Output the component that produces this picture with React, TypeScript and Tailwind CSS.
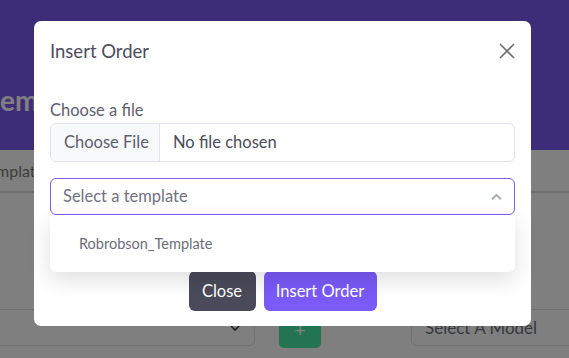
export default function App() {
  return (
    <div className="relative h-[358px] w-[569px] overflow-hidden bg-white font-[Lato,sans-serif]">
      {/* underlying page */}
      <div className="flex h-[150px] flex-col bg-[#7a5af0]">
        <div className="mt-[86px] whitespace-nowrap text-[28px] font-bold leading-[28px] text-white">ement</div>
      </div>
      <div className="box-border flex h-[43px] items-center border-b-2 border-[#dedede]">
        <span className="ml-[-4px] whitespace-nowrap text-[16px] text-[#7a7a7a]">mplate</span>
      </div>
      <div className="mt-[116px] flex items-start">
        <div className="relative ml-[-10px] h-[37px] w-[265px] shrink-0 rounded-[6px] border border-[#dee2e6]">
          <svg className="absolute right-[14px] top-[15px]" width="10" height="6" viewBox="0 0 10 6" fill="none">
            <path d="M1 1l4 4 4-4" stroke="#343a40" strokeWidth="1.6" />
          </svg>
        </div>
        <div className="ml-[24px] flex h-[39px] w-[42px] shrink-0 items-center justify-center rounded-[5px] bg-[#46e8a6] text-[20px] leading-none text-white">
          +
        </div>
        <div className="ml-[90px] flex h-[37px] w-[200px] shrink-0 items-center whitespace-nowrap rounded-[6px] border border-[#dee2e6] pl-[13px] text-[17px] text-[#6c757d]">
          Select A Model
        </div>
      </div>

      {/* backdrop */}
      <div className="absolute inset-0 bg-black/50" />

      {/* modal */}
      <div className="absolute left-[34px] top-[21px] w-[497px] rounded-[7px] bg-white">
        <div className="flex items-center justify-between p-4">
          <div className="text-[18.5px] leading-[28px] text-[#4d4d5c]">Insert Order</div>
          <svg width="16" height="16" viewBox="0 0 16 16" fill="none">
            <path d="M1 1l14 14M15 1L1 15" stroke="#6f6f73" strokeWidth="1.6" />
          </svg>
        </div>
        <div className="px-4 pt-[18px]">
          <div className="mb-[2px] text-[16.5px] leading-[22px] text-[#5e5e6d]">Choose a file</div>
          <div className="box-border flex h-[39px] overflow-hidden rounded-[6px] border border-[#e4e2ef] text-[16.5px]">
            <div className="flex w-[109px] shrink-0 items-center whitespace-nowrap border-r border-[#e4e2ef] bg-[#f8f9fb] pl-[13px] text-[#5e5e6d]">
              Choose File
            </div>
            <div className="flex items-center whitespace-nowrap pl-[13px] text-[#4c4c5a]">No file chosen</div>
          </div>
          <div className="relative mt-4">
            <div className="box-border flex h-[37px] items-center rounded-[6px] border border-[#7b5cf5] pl-[12px] text-[16.5px] text-[#72727f]">
              Select a template
              <svg className="absolute right-[13px] top-[16px]" width="11" height="6" viewBox="0 0 11 6" fill="none">
                <path d="M1 5.2l4.5-4.2 4.5 4.2" stroke="#a9adb6" strokeWidth="2" />
              </svg>
            </div>
            <div className="absolute left-0 right-0 top-full z-10 flex h-[57px] items-center rounded-b-[6px] bg-white pl-[29px] text-[14.5px] text-[#6d6d7b] shadow-[0_8px_22px_rgba(0,0,0,0.13)]">
              Robrobson_Template
            </div>
          </div>
          <div className="mt-[56px] flex justify-center gap-2 pb-[15px]">
            <button className="flex h-[40px] w-[67px] items-center justify-center rounded-[6px] bg-[#4b4a5a] text-[16.5px] text-white">Close</button>
            <button className="flex h-[40px] w-[113px] items-center justify-center whitespace-nowrap rounded-[6px] bg-[#7a5af8] text-[16.5px] text-white">Insert Order</button>
          </div>
        </div>
      </div>
    </div>
  );
}
